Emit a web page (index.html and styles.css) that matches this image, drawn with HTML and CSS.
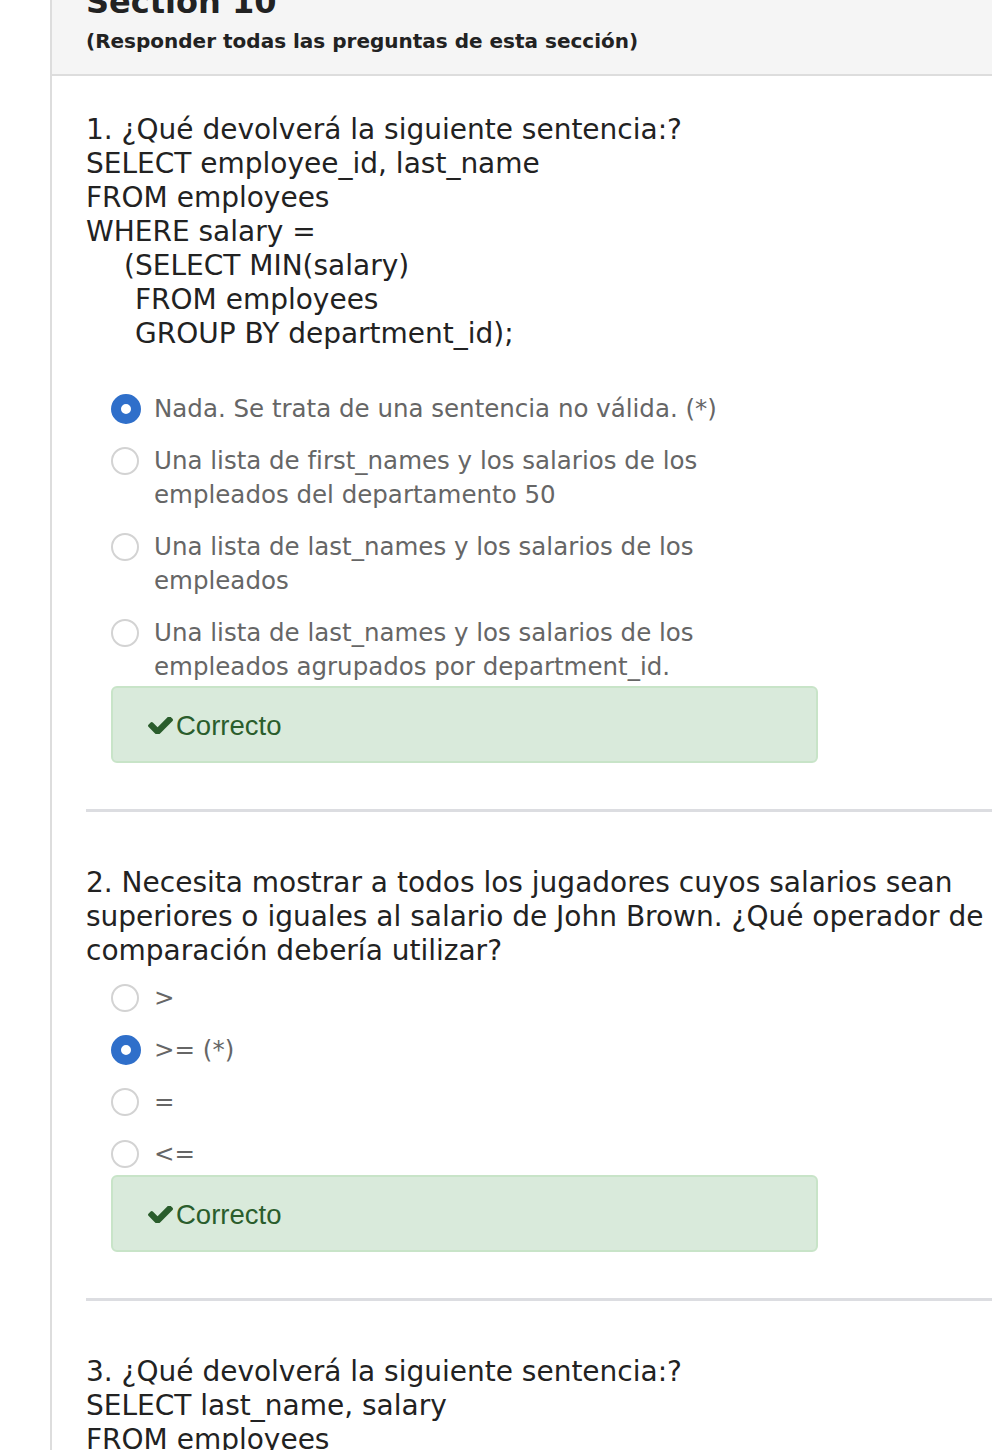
FILE: index.html
```html
<!DOCTYPE html>
<html lang="es">
<head>
<meta charset="utf-8">
<title>Section 10</title>
<link rel="stylesheet" href="styles.css">
</head>
<body>
<div class="page">
  <div class="section-head">
    <h2 class="section-title">Section 10</h2>
    <p class="section-note">(Responder todas las preguntas de esta sección)</p>
  </div>
  <div class="questions">
    <div class="question">
      <div class="q-text">1. ¿Qué devolverá la siguiente sentencia:?<br>SELECT employee_id, last_name<br>FROM employees<br>WHERE salary =<br><span class="ind1">(SELECT MIN(salary)</span><br><span class="ind2">FROM employees</span><br><span class="ind2">GROUP BY department_id);</span></div>
      <ul class="options options-q1">
        <li class="option"><span class="radio radio-on"></span><span class="opt-text">Nada. Se trata de una sentencia no válida. (*)</span></li>
        <li class="option"><span class="radio"></span><span class="opt-text">Una lista de first_names y los salarios de los empleados del departamento 50</span></li>
        <li class="option"><span class="radio"></span><span class="opt-text">Una lista de last_names y los salarios de los empleados</span></li>
        <li class="option"><span class="radio"></span><span class="opt-text">Una lista de last_names y los salarios de los empleados agrupados por department_id.</span></li>
      </ul>
      <div class="alert alert-q1"><svg class="check" viewBox="121 402 1550 1024" width="25" height="17" aria-hidden="true"><path d="M1671 566q0 40-28 68l-724 724-136 136q-28 28-68 28t-68-28l-136-136-362-362q-28-28-28-68t28-68l136-136q28-28 68-28t68 28l294 295 656-657q28-28 68-28t68 28l136 136q28 28 28 68z"/></svg>Correcto</div>
    </div>
    <hr class="divider">
    <div class="question">
      <div class="q-text">2. Necesita mostrar a todos los jugadores cuyos salarios sean<br>superiores o iguales al salario de John Brown. ¿Qué operador de<br>comparación debería utilizar?</div>
      <ul class="options options-q2">
        <li class="option"><span class="radio"></span><span class="opt-text">&gt;</span></li>
        <li class="option"><span class="radio radio-on"></span><span class="opt-text">&gt;= (*)</span></li>
        <li class="option"><span class="radio"></span><span class="opt-text">=</span></li>
        <li class="option"><span class="radio"></span><span class="opt-text">&lt;=</span></li>
      </ul>
      <div class="alert alert-q2"><svg class="check" viewBox="121 402 1550 1024" width="25" height="17" aria-hidden="true"><path d="M1671 566q0 40-28 68l-724 724-136 136q-28 28-68 28t-68-28l-136-136-362-362q-28-28-28-68t28-68l136-136q28-28 68-28t68 28l294 295 656-657q28-28 68-28t68 28l136 136q28 28 28 68z"/></svg>Correcto</div>
    </div>
    <hr class="divider">
    <div class="question">
      <div class="q-text">3. ¿Qué devolverá la siguiente sentencia:?<br>SELECT last_name, salary<br>FROM employees</div>
    </div>
  </div>
</div>
</body>
</html>
```

FILE: styles.css
```css
html, body {
  margin: 0;
  padding: 0;
  background: #ffffff;
  overflow: hidden;
}

body {
  font-family: "DejaVu Sans", Verdana, sans-serif;
  color: #222222;
}

.page {
  margin-left: 50px;
  border-left: 2px solid #dddddd;
  min-height: 1500px;
}

.section-head {
  background: #f5f5f5;
  border-bottom: 2px solid #dddddd;
  padding: 0 0 21px 34px;
}

.section-title {
  margin: -16px 0 0 0;
  font-size: 32px;
  line-height: 36px;
  font-weight: bold;
  color: #222222;
}

.section-note {
  margin: 9px 0 0 0;
  font-size: 20px;
  line-height: 24px;
  font-weight: bold;
  color: #222222;
}

.questions {
  padding: 35px 0 0 34px;
}

.q-text {
  font-size: 28px;
  line-height: 34px;
  padding-top: 2px;
  white-space: nowrap;
  color: #222222;
}

.ind1 {
  padding-left: 38px;
}

.ind2 {
  padding-left: 49px;
}

.options {
  list-style: none;
  margin: 0;
  padding: 0 0 0 25px;
  width: 707px;
  display: flex;
  flex-direction: column;
  gap: 18px;
}

.options-q1 {
  margin-top: 41px;
}

.options-q2 {
  margin-top: 13px;
}

.option {
  display: flex;
  align-items: flex-start;
  font-size: 24.5px;
  line-height: 34px;
  color: #666666;
}

.radio {
  flex: 0 0 auto;
  box-sizing: border-box;
  width: 28px;
  height: 28px;
  margin: 3px 15px 0 0;
  border: 2px solid #d3d3d3;
  border-radius: 50%;
  background: #ffffff;
}

.radio-on {
  width: 30px;
  height: 30px;
  margin: 2px 13px 0 0;
  border: 10px solid #2f6fca;
  background: #ffffff;
}

.opt-text {
  flex: 0 1 auto;
  max-width: 645px;
}

.alert {
  margin-left: 25px;
  width: 707px;
  box-sizing: border-box;
  background: #d9eadb;
  border: 2px solid #c8e4c8;
  border-radius: 6px;
  padding: 22px 35px 20px 35px;
  font-family: "Liberation Sans", Arial, sans-serif;
  font-size: 27.5px;
  line-height: 31px;
  color: #2a5d2c;
  display: flex;
  align-items: center;
}

.alert-q1 {
  margin-top: 2px;
}

.alert-q2 {
  margin-top: 4px;
}

.check {
  fill: #2a5d2c;
  margin-right: 3px;
}

.divider {
  border: 0;
  height: 3px;
  background: #dcdde1;
  margin: 46px 0 52px 0;
}
```
